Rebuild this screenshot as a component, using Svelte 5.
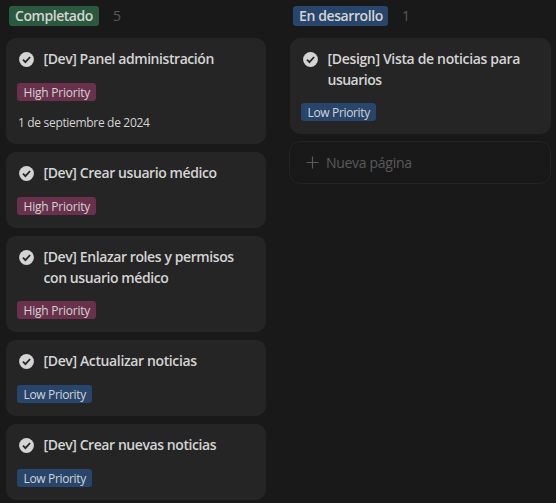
<script>
  const columns = [
    {
      name: 'Completado', tone: 'green', count: 5, tagWidth: 90, tracking: -0.45,
      cards: [
        { lines: [['[Dev] Panel administración', -0.43]], priority: 'High', date: '1 de septiembre de 2024' },
        { lines: [['[Dev] Crear usuario médico', -0.41]], priority: 'High' },
        { lines: [['[Dev] Enlazar roles y permisos', -0.4], ['con usuario médico', -0.42]], priority: 'High' },
        { lines: [['[Dev] Actualizar noticias', -0.37]], priority: 'Low' },
        { lines: [['[Dev] Crear nuevas noticias', -0.42]], priority: 'Low' }
      ]
    },
    {
      name: 'En desarrollo', tone: 'blue', count: 1, tagWidth: 95, tracking: -0.4, canAdd: true,
      cards: [{ lines: [['[Design] Vista de noticias para', -0.34], ['usuarios', -0.5]], priority: 'Low' }]
    }
  ];
</script>

<main class="board">
  {#each columns as column}
    <section class="column">
      <header>
        <span class="status {column.tone}" style="width: {column.tagWidth}px; letter-spacing: {column.tracking}px">{column.name}</span>
        <span class="count">{column.count}</span>
      </header>
      <div class="cards">
        {#each column.cards as card}
          <article class="card">
            <div class="heading">
              <svg class="check" viewBox="0 0 15 15" width="15" height="15" aria-hidden="true">
                <circle cx="7.5" cy="7.5" r="7.4" fill="#d4d4d4" />
                <path d="M4 7.7 6.4 10.1 11.1 5" fill="none" stroke="#252525" stroke-width="1.8" />
              </svg>
              <h2>{#each card.lines as [line, tracking]}<span style="letter-spacing: {tracking}px">{line}</span>{/each}</h2>
            </div>
            <span class="priority {card.priority.toLowerCase()}">{card.priority} Priority</span>
            {#if card.date}<time>{card.date}</time>{/if}
          </article>
        {/each}
        {#if column.canAdd}
          <button class="add">
            <svg viewBox="0 0 13 13" width="13" height="13" aria-hidden="true">
              <path d="M6.5 .5v12M.5 6.5h12" stroke="#5a5a5a" stroke-width="1.2" />
            </svg>
            <span>Nueva página</span>
          </button>
        {/if}
      </div>
    </section>
  {/each}
</main>

<style>
  :global(body) { background: #191919; }
  .board {
    box-sizing: border-box;
    display: flex;
    gap: 24px;
    height: 503px;
    padding: 6px 6px 0;
    overflow: hidden;
    background: #191919;
    color: #d4d4d4;
    font-family: "Segoe UI", "Open Sans", "Noto Sans", sans-serif;
  }
  .column { flex: 0 0 260px; }
  header { display: flex; gap: 14px; height: 32px; padding-left: 3px; }
  .status {
    box-sizing: border-box;
    height: 20px;
    padding-left: 6px;
    border-radius: 3px;
    font-size: 14px;
    font-weight: 600;
    line-height: 20px;
    white-space: nowrap;
  }
  .green { background: #2b593f; }
  .blue { background: #28456c; }
  .count { color: #5a5a5a; font-size: 14px; line-height: 20px; }
  .cards { display: flex; flex-direction: column; gap: 8px; }
  .card {
    box-sizing: border-box;
    display: flex;
    flex-direction: column;
    align-items: flex-start;
    padding: 10px 11px 13px;
    border-radius: 10px;
    background: #252525;
  }
  .heading { display: flex; min-height: 22px; margin-bottom: 13px; }
  .check { flex: none; margin: 4px 9.5px 0 2px; }
  h2 { margin: 0; font-size: 14px; font-weight: 600; line-height: 21px; }
  h2 span { display: block; white-space: nowrap; }
  .priority {
    box-sizing: border-box;
    height: 18px;
    padding-left: 6.5px;
    border-radius: 3px;
    font-size: 12px;
    line-height: 20px;
    white-space: nowrap;
  }
  .high { width: 79px; background: #69314c; letter-spacing: -0.22px; }
  .low { width: 75px; background: #28456c; letter-spacing: -0.34px; }
  time { margin: 12px 0 3px; padding-left: 1px; font-size: 12px; line-height: 20px; height: 15px; letter-spacing: -0.32px; white-space: nowrap; }
  .add {
    box-sizing: border-box;
    display: flex;
    align-items: center;
    gap: 7px;
    width: 262px;
    height: 43px;
    margin: -1px 0 0 -1px;
    padding: 0 16px;
    border: 1px solid #242424;
    border-radius: 11px;
    background: none;
    color: #5a5a5a;
    font: 14px "Segoe UI", "Open Sans", "Noto Sans", sans-serif;
    letter-spacing: -0.3px;
  }
</style>
